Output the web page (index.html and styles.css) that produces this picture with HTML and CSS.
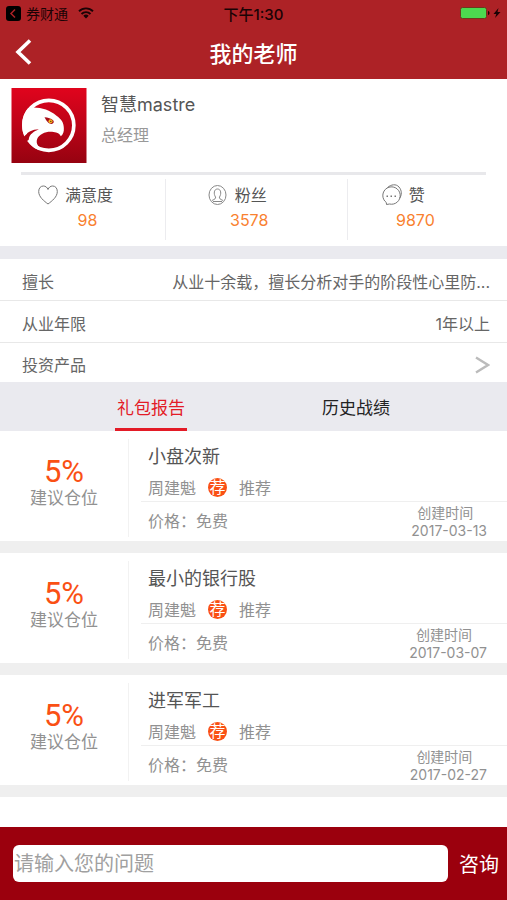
FILE: index.html
```html
<!DOCTYPE html>
<html lang="zh-CN">
<head>
    <meta charset="UTF-8">
    <meta name="viewport" content="width=device-width, initial-scale=1.0">
    <title>我的老师</title>
    <link rel="stylesheet" href="styles.css">
</head>
<body>
    <header class="header">
        <div class="status-bar">
            <div class="status-left">
                <svg width="15" height="15" viewBox="0 0 15 15"><rect width="15" height="15" rx="3" fill="#000"/><path d="M9 3.5 5 7.5l4 4" fill="none" stroke="#ad2226" stroke-width="1.5"/></svg>
                <span class="status-app">券财通</span>
                <svg class="wifi" width="16" height="12" viewBox="0 0 16 12"><path d="M1 4.2a10 10 0 0 1 14 0M3.5 7a6.4 6.4 0 0 1 9 0" fill="none" stroke="#1a0305" stroke-width="1.9"/><path d="M8 11.5 5.3 8.8a3.9 3.9 0 0 1 5.4 0z" fill="#1a0305"/></svg>
            </div>
            <span class="status-time">下午1:30</span>
            <div class="status-right">
                <svg width="41" height="12" viewBox="0 0 41 12"><rect x=".5" y=".5" width="26" height="11" rx="2" fill="#4cd94f" stroke="#6b3a1c"/><path d="M28 4c2 .5 2 3.500 0 4z" fill="#1a0305"/><path d="M38.500 1 33.500 7h2.800L35 11l5.500-6h-3z" fill="#1a0305"/></svg>
            </div>
        </div>
        <div class="nav-bar">
            <button class="back" aria-label="返回">
                <svg width="17" height="26" viewBox="0 0 17 26"><path d="M15 1.500 3 13l12 11.500" fill="none" stroke="#fff" stroke-width="3.600"/></svg>
            </button>
            <h1 class="nav-title">我的老师</h1>
        </div>
    </header>

    <main class="content">
        <section class="profile">
            <svg class="avatar" viewBox="0 0 225 225">
                <defs>
                    <linearGradient id="avatarBg" x1="0" y1="0" x2="0" y2="1">
                        <stop offset="0" stop-color="#e0041d"/>
                        <stop offset=".5" stop-color="#bd0418"/>
                        <stop offset="1" stop-color="#960210"/>
                    </linearGradient>
                </defs>
                <rect width="225" height="225" fill="url(#avatarBg)"/>
                <circle cx="112" cy="112" r="75" fill="none" stroke="#fff" stroke-width="11"/>
                <path d="M37 146C48 134 62 127 84 125L80 132C66 137 56 144 51 156L42 162Z" fill="#b00416"/>
                <path d="M50 60C80 55 112 64 135 83C150 94 157 104 157 120C158 130 155 140 148 145C144 137 138 133 126 132C105 129 84 137 77 153C72 167 81 180 98 188C70 186 51 170 52 152C55 139 66 131 82 124C62 125 48 132 39 144C27 118 30 82 50 60Z" fill="#fff"/>
                <path d="M99 88c10 1 20 3 27 10 2 4 0 9-6 10-8-1-14-6-21-20z" fill="#a80c18"/>
                <circle cx="117" cy="100" r="6" fill="#f5b81c"/>
                <circle cx="118" cy="100" r="2" fill="#401008"/>
            </svg>
            <div class="profile-text">
                <h2 class="profile-name">智慧mastre</h2>
                <p class="profile-job">总经理</p>
            </div>
        </section>

        <section class="stats">
            <div class="stat stat-heart">
                <div class="stat-inner">
                    <div class="stat-label">
                        <svg width="20" height="20" viewBox="0 0 20 20"><path d="M10 19C6 16 .7 12 .7 6.500C.7 3 2.800 1 5.300 1C7.500 1 9.200 2.300 10 4.500C10.800 2.300 12.500 1 14.700 1C17.200 1 19.300 3 19.300 6.500C19.300 12 14 16 10 19Z" fill="none" stroke="#777"/></svg>
                        满意度
                    </div>
                    <div class="stat-value">98</div>
                </div>
            </div>
            <div class="stat stat-fans">
                <div class="stat-inner">
                    <div class="stat-label">
                        <svg width="20" height="20" viewBox="0 0 20 20"><g fill="none" stroke="#888"><ellipse cx="9.500" cy="10" rx="8.500" ry="9.500"/><path d="M7.500 12C5.500 9 5.800 4 9.500 4s4 5 2 8c-.5 1.500.5 2 3.500 3.500M7.500 12c.5 1.500-.5 2-3.500 3.500M5 16.500h9"/></g></svg>
                        粉丝
                    </div>
                    <div class="stat-value">3578</div>
                </div>
            </div>
            <div class="stat stat-likes">
                <div class="stat-inner">
                    <div class="stat-label">
                        <svg width="20" height="22" viewBox="0 0 20 22"><g fill="none" stroke="#777"><path d="M4.500 20.500 4.300 18.500A8.700 8.700 0 1 1 7.500 20z"/><path d="M5.500 3.500C9 .5 14-.5 17 3c3 3.500 3 8 .5 11.500"/></g><path d="M4.500 11.500h1.500v1.500h-1.500zM8.500 11.500h1.500v1.500h-1.500zM12.500 11.500h1.500v1.500h-1.500z" fill="#777"/></svg>
                        赞
                    </div>
                    <div class="stat-value">9870</div>
                </div>
            </div>
        </section>

        <dl class="info">
            <div class="info-row">
                <dt>擅长</dt>
                <dd>从业十余载，擅长分析对手的阶段性心里防...</dd>
            </div>
            <div class="info-row">
                <dt>从业年限</dt>
                <dd>1年以上</dd>
            </div>
            <div class="info-row">
                <dt>投资产品</dt>
                <dd><a class="more" href="#" aria-label="投资产品"><svg width="15" height="18" viewBox="0 0 15 18"><path d="M1 1.500 13 9 1 16.500" fill="none" stroke="#bbb" stroke-width="2.400"/></svg></a></dd>
            </div>
        </dl>

        <nav class="tabs">
            <button class="tab active">礼包报告</button>
            <button class="tab">历史战绩</button>
        </nav>

        <section class="reports">
            <article class="report">
                <div class="position">
                    <span class="percent">5%</span>
                    <span class="position-label">建议仓位</span>
                </div>
                <div class="report-body">
                    <h3 class="report-title">小盘次新</h3>
                    <div class="report-author">周建魁 <span class="badge">荐</span> 推荐</div>
                    <div class="report-foot">
                        <span class="price">价格：<span>免费</span></span>
                        <div class="created"><span class="created-label">创建时间</span><time>2017-03-13</time></div>
                    </div>
                </div>
            </article>
            <article class="report">
                <div class="position">
                    <span class="percent">5%</span>
                    <span class="position-label">建议仓位</span>
                </div>
                <div class="report-body">
                    <h3 class="report-title">最小的银行股</h3>
                    <div class="report-author">周建魁 <span class="badge">荐</span> 推荐</div>
                    <div class="report-foot">
                        <span class="price">价格：<span>免费</span></span>
                        <div class="created"><span class="created-label">创建时间</span><time>2017-03-07</time></div>
                    </div>
                </div>
            </article>
            <article class="report">
                <div class="position">
                    <span class="percent">5%</span>
                    <span class="position-label">建议仓位</span>
                </div>
                <div class="report-body">
                    <h3 class="report-title">进军军工</h3>
                    <div class="report-author">周建魁 <span class="badge">荐</span> 推荐</div>
                    <div class="report-foot">
                        <span class="price">价格：<span>免费</span></span>
                        <div class="created"><span class="created-label">创建时间</span><time>2017-02-27</time></div>
                    </div>
                </div>
            </article>
        </section>
    </main>

    <form class="ask-bar">
        <input class="ask-input" type="text" placeholder="请输入您的问题" aria-label="请输入您的问题">
        <button class="ask-button" type="button">咨询</button>
    </form>
</body>
</html>
```

FILE: styles.css
```css
* {
    box-sizing: border-box;
    margin: 0;
    padding: 0;
}

body {
    font-family: Inter, "Noto Sans CJK SC", sans-serif;
    font-size: 16px;
    color: #555;
    background-color: #fff;
    height: 100vh;
    display: flex;
    flex-direction: column;
}

button, input {
    font-family: inherit;
    border: none;
    background: none;
}

button {
    cursor: pointer;
}

svg {
    display: block;
    flex-shrink: 0;
}

h1, h2, h3 {
    font-weight: 400;
}

/* Header */
.header {
    background-color: #ad2226;
}

.status-bar {
    display: grid;
    grid-template-columns: 1fr auto 1fr;
    align-items: center;
    height: 26px;
    padding: 0 6px;
    font-size: 14px;
    color: #1a0305;
}

.status-left {
    display: flex;
    align-items: center;
    gap: 5px;
}

.wifi {
    margin-left: 5px;
}

.status-time {
    font-size: 15px;
    font-weight: 500;
}

.status-right {
    justify-self: end;
}

.nav-bar {
    display: grid;
    grid-template-columns: 1fr auto 1fr;
    align-items: center;
    height: 53px;
    padding: 0 15px;
}

.nav-bar, .tabs {
    padding-bottom: 2px;
}

.back {
    justify-self: start;
}

.nav-title {
    font-size: 22px;
    font-weight: 500;
    color: #fff;
}

/* Teacher profile */
.content {
    flex: 1;
    min-height: 0;
    overflow: hidden;
}

.profile {
    display: flex;
    gap: 14px;
    padding: 9px 11px;
}

.avatar {
    width: 76px;
    height: 75px;
}

.profile-name {
    font-size: 18px;
    line-height: 34px;
    color: #555;
}

.profile-job {
    line-height: 26px;
    color: #999;
}

.stats {
    display: grid;
    grid-template-columns: 166fr 182fr 159fr;
    padding-bottom: 6px;
    border-bottom: 13px solid #eaeaef;
}

.stats::before {
    content: "";
    grid-column: 1 / -1;
    height: 3px;
    margin: 0 21px 4px;
    background-color: #e8e8eb;
}

.stat {
    display: flex;
    height: 61px;
    padding-top: 3px;
    border-right: 1px solid #ececef;
}

.stat:last-child {
    border-right: none;
}

.stat-heart {
    padding-left: 38px;
}

.stat-fans {
    padding-left: 40px;
}

.stat-likes {
    padding-left: 24px;
}

.stat-inner {
    display: flex;
    flex-direction: column;
    align-items: center;
}

.stat-label {
    display: flex;
    align-items: center;
    gap: 7px;
    line-height: 26px;
}

.stat-value {
    padding-left: 24px;
    line-height: 24px;
    color: #f9812f;
}

/* Info rows */
.info {
    color: #666;
}

.info-row {
    display: flex;
    justify-content: space-between;
    align-items: center;
    height: 42px;
    padding: 2px 17px 0 22px;
    border-bottom: 1px solid #e8e8e8;
}

.info-row:last-child {
    height: 39px;
    border-bottom: none;
}

.more {
    display: block;
    padding-top: 3px;
}

/* Tabs */
.tabs {
    display: flex;
    justify-content: center;
    gap: 133px;
    height: 49px;
    padding-bottom: 0;
    background-color: #eaeaef;
}

.tab {
    padding: 2px 2px 0;
    font-size: 17px;
    color: #222;
    border-bottom: 3px solid transparent;
}

.tab.active {
    color: #e31b27;
    border-bottom-color: #e31b27;
}

/* Report list */
.report {
    display: flex;
    padding-top: 8px;
    color: #919191;
    border-bottom: 12px solid #efefef;
}

.position {
    display: flex;
    flex-direction: column;
    align-items: center;
    justify-content: center;
    width: 129px;
    margin-bottom: 4px;
    padding-bottom: 10px;
    border-right: 1px solid #f2f2f2;
}

.percent {
    font-family: Roboto, sans-serif;
    font-size: 31px;
    line-height: 30px;
    color: #fa5014;
}

.position-label {
    font-size: 17px;
    line-height: 22px;
}

.report-body {
    flex: 1;
    margin-left: 12px;
}

.report-title {
    padding-left: 7px;
    font-size: 18px;
    line-height: 36px;
    color: #555;
}

.report-author {
    display: flex;
    align-items: center;
    gap: 12px;
    height: 27px;
    padding: 0 0 2px 7px;
    border-bottom: 1px solid #efefef;
}

.badge {
    width: 19px;
    height: 19px;
    border-radius: 50%;
    background-color: #fa5014;
    color: #fff;
    font-size: 16px;
    line-height: 19px;
    text-align: center;
}

.report-foot {
    display: flex;
    justify-content: space-between;
    align-items: flex-start;
    height: 39px;
    padding: 2px 20px 0 7px;
}

.price {
    line-height: 34px;
}

.created {
    font-size: 14px;
    line-height: 18px;
    text-align: center;
}

.created-label {
    padding-right: 8px;
}

.created time {
    display: block;
}

/* Question box */
.ask-bar {
    display: flex;
    align-items: center;
    gap: 11px;
    height: 73px;
    padding: 0 8px 0 13px;
    background-color: #9b000d;
}

.ask-input {
    flex: 1;
    min-width: 0;
    height: 37px;
    padding: 0 1px;
    border-radius: 6px;
    background-color: #fff;
    font-size: 20px;
}

.ask-input::placeholder {
    color: #a0a0a0;
}

.ask-button {
    font-size: 20px;
    color: #fff;
}
```
